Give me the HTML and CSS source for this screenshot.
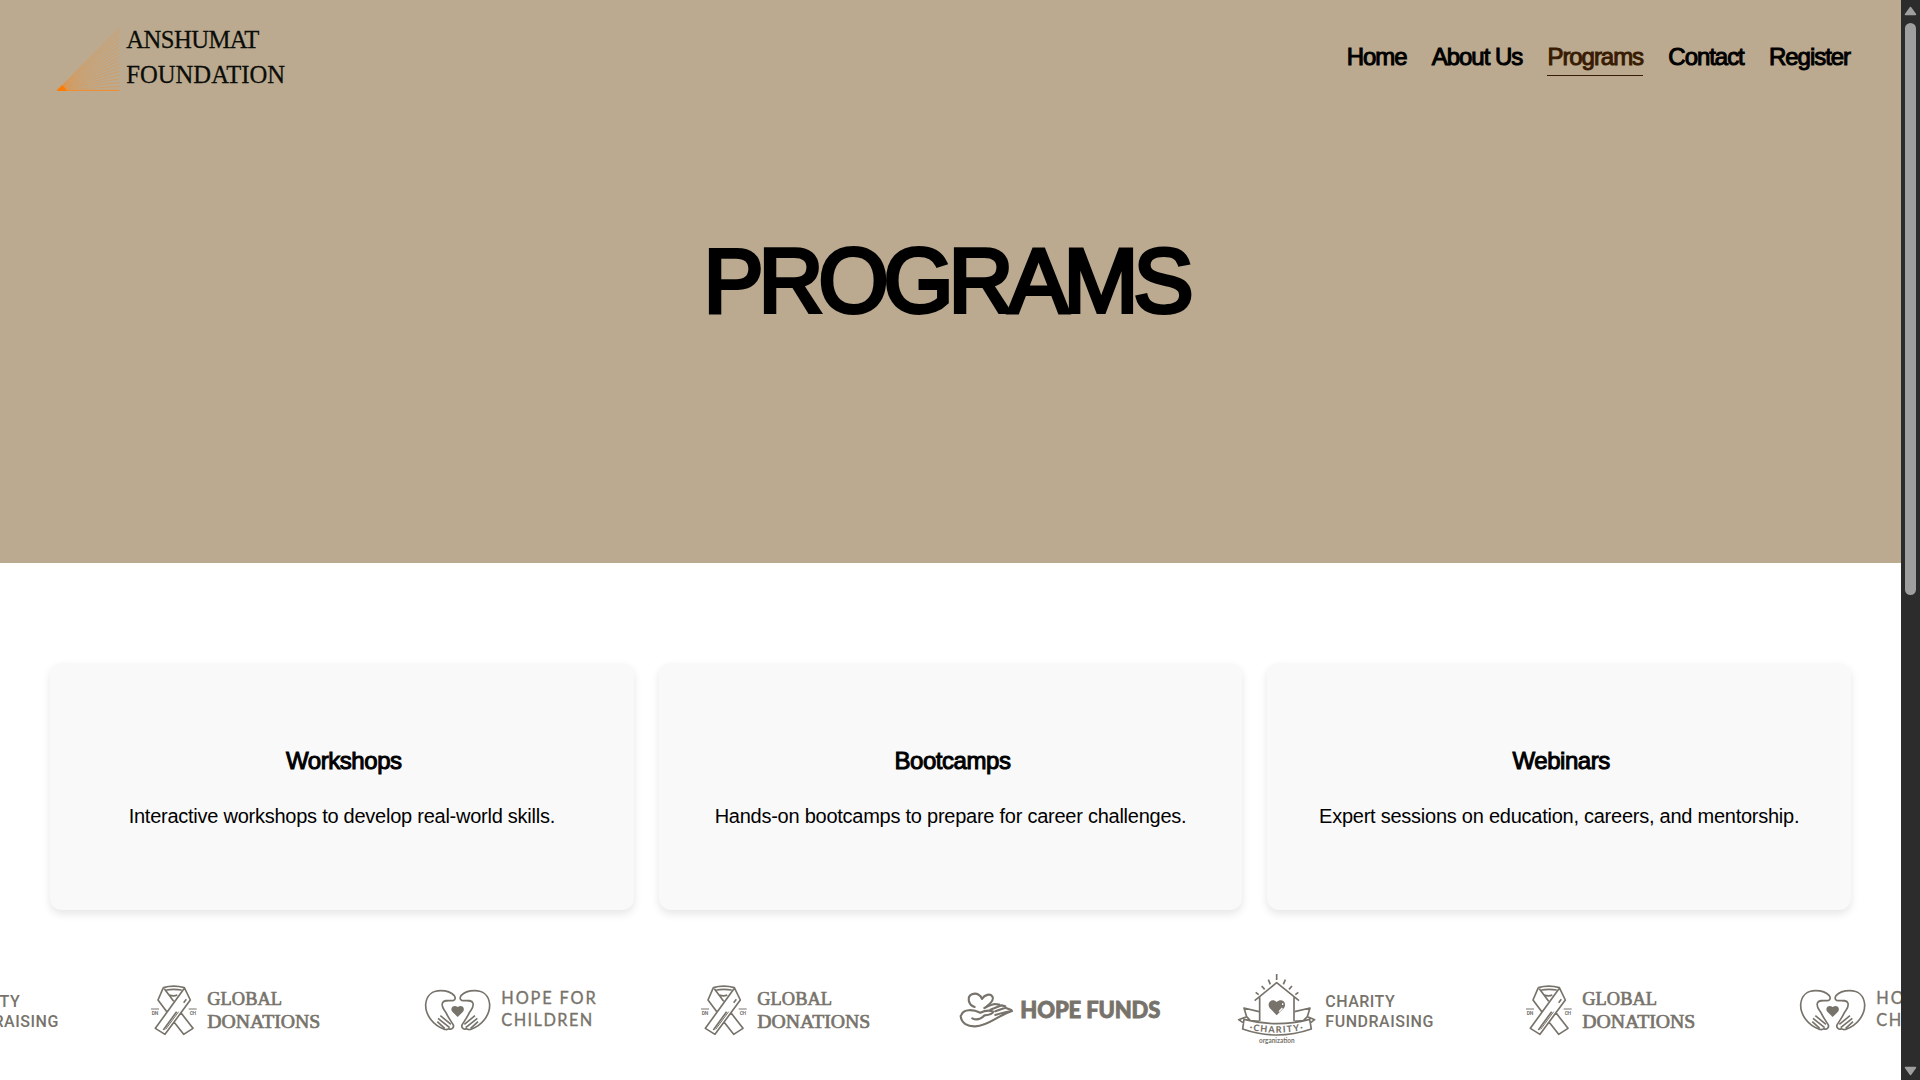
FILE: index.html
```html
<!DOCTYPE html>
<html lang="en">
<head>
<meta charset="utf-8">
<title>Programs - Anshumat Foundation</title>
<link rel="stylesheet" href="styles.css">
</head>
<body>
<svg class="defs" width="0" height="0" aria-hidden="true">
  <defs>
    <symbol id="logo-global" viewBox="0 0 825 300">
      <g transform="translate(-294 0)">
        <g class="line">
          <path d="M490 83Q521 74 553 83L571 120 495 223 466 205 552 86M490 83L474 120 501 156M493 86L521 124M499 90Q521 86 545 90M508 105Q521 110 532 105M544 160L579 205 551 223 522 186M490 210L530 155M551 128L559 118"/>
          <path class="thin" d="M497 208L536 155M453 147H477M566 147H590"/>
        </g>
        <text x="455" y="166" class="tiny" textLength="20">DN</text>
        <text x="569" y="166" class="tiny" textLength="19">CH</text>
        <text x="622" y="135" class="serif" textLength="224" lengthAdjust="spacingAndGlyphs">GLOBAL</text>
        <text x="622" y="205" class="serif" textLength="339" lengthAdjust="spacingAndGlyphs">DONATIONS</text>
      </g>
    </symbol>
    <symbol id="logo-children" viewBox="0 0 825 300">
      <g transform="translate(111 0)">
        <g id="hand" class="line">
          <path d="M104 208C70 197 46 165 47 134C49 105 68 92 92 92C110 92 125 98 133 107C139 116 133 123 124 122C112 121 100 120 97 130C94 142 102 148 108 158C114 172 124 184 130 195C133 203 124 210 117 206C112 210 107 209 104 208"/>
          <path d="M91 167L123 193M84 175L119 203M82 185L104 205"/>
        </g>
        <use href="#hand" transform="translate(286 0) scale(-1 1)"/>
        <path class="solid" d="M143 171L127 155C119 145 130 132 143 141C156 132 167 145 159 155Z"/>
        <text x="274" y="133" class="geo" textLength="283">HOPE FOR</text>
        <text x="274" y="197" class="geo" textLength="273">CHILDREN</text>
      </g>
    </symbol>
    <symbol id="logo-funds" viewBox="0 0 825 300">
      <g transform="translate(51 0)">
        <g class="bold">
          <path d="M104 141C84 135 80 110 96 103C110 97 122 105 126 117C134 104 150 100 157 109C164 119 154 129 138 141"/>
          <path d="M64 165C70 146 100 148 121 158C136 151 148 150 160 155C157 162 148 165 134 166C122 178 108 181 97 175"/>
          <path d="M62 168C64 190 83 200 106 199C148 197 169 168 216 153C201 154 188 158 166 165"/>
          <path d="M133 144C146 138 154 134 163 132L178 134M151 149L185 136 196 139M166 154L196 143 214 150"/>
        </g>
        <text x="241" y="173" class="heavy" textLength="420">HOPE FUNDS</text>
      </g>
    </symbol>
    <symbol id="logo-charity" viewBox="0 0 825 300">
      <g transform="translate(66 0)">
        <g class="line">
          <path d="M104 122L170 68 237 122M119 112V184M222 112V184M170 42V60M145 59L151 73M196 59L190 73M125 78L134 88M216 78L207 88M107 97L116 104M235 97L226 104"/>
          <path d="M72 178Q170 204 269 178L274 207Q170 243 68 207ZM72 190L56 179 80 170 72 144 117 155M269 190L284 179 262 170 270 144 224 155M80 170L91 182 117 184M262 170L250 182 224 184"/>
        </g>
        <path class="solid" d="M170 166L149 144C138 127 157 113 170 126C184 113 203 127 192 144Z"/>
        <path class="spark" d="M177 155L187 144M188 135V130"/>
        <path id="ribbon-arc" fill="none" d="M84 208Q170 228 258 208"/>
        <text class="banner"><textPath href="#ribbon-arc" startOffset="4" textLength="166">·CHARITY·</textPath></text>
        <text x="117" y="250" class="org" textLength="107" lengthAdjust="spacingAndGlyphs">organization</text>
        <text x="316" y="142" class="sans" textLength="208">CHARITY</text>
        <text x="316" y="202" class="sans" textLength="324">FUNDRAISING</text>
      </g>
    </symbol>
  </defs>
</svg>

<div class="window">
  <div class="page">
    <div class="hero">
      <header class="header">
        <svg class="brand" viewBox="0 0 810 300" role="img" aria-label="Anshumat Foundation">
          <path class="rays" d="M52 241L238 55M52 241L238 65M52 241L238 75M52 241L238 85M52 241L238 96M52 241L238 107M52 241L238 118M52 241L238 129M52 241L238 140M52 241L238 151M52 241L238 162M52 241L238 173M52 241L238 184M52 241L238 195M52 241L238 206M52 241L238 217M52 241L238 229"/>
          <path class="base" d="M52 241H238"/>
          <path class="tip" d="M50 242L66 226 74 233 82 242Z"/>
          <text x="259" y="113" textLength="399">ANSHUMAT</text>
          <text x="259" y="219" textLength="476">FOUNDATION</text>
        </svg>
        <nav class="nav">
          <a>Home</a><a>About Us</a><a class="active">Programs</a><a>Contact</a><a>Register</a>
        </nav>
      </header>
      <h1>PROGRAMS</h1>
    </div>
    <main class="cards">
      <section class="card"><h2>Workshops</h2><p>Interactive workshops to develop real-world skills.</p></section>
      <section class="card"><h2>Bootcamps</h2><p>Hands-on bootcamps to prepare for career challenges.</p></section>
      <section class="card"><h2>Webinars</h2><p>Expert sessions on education, careers, and mentorship.</p></section>
    </main>
    <div class="partners">
      <svg><use href="#logo-charity"/></svg>
      <svg><use href="#logo-global"/></svg>
      <svg><use href="#logo-children"/></svg>
      <svg><use href="#logo-global"/></svg>
      <svg><use href="#logo-funds"/></svg>
      <svg><use href="#logo-charity"/></svg>
      <svg><use href="#logo-global"/></svg>
      <svg><use href="#logo-children"/></svg>
    </div>
  </div>
  <div class="scrollbar">
    <svg class="arrow" viewBox="0 0 13 10"><path d="M6.5 1.5L11.5 8.5H1.5Z"/></svg>
    <div class="thumb"></div>
    <svg class="arrow down" viewBox="0 0 13 10"><path d="M6.5 8.5L11.5 1.5H1.5Z"/></svg>
  </div>
</div>
</body>
</html>
```
FILE: styles.css
```css
* { box-sizing: border-box; }
body {
  margin: 0;
  overflow: hidden;
  background: #fff;
  color: #000;
  font-family: "Liberation Sans", Arial, sans-serif;
}
.defs { position: absolute; }
.window { display: flex; height: 1080px; }
.page { width: 1901px; overflow: hidden; }

.hero { height: 563px; background: #bbaa8f; }
.header {
  display: flex;
  justify-content: space-between;
  height: 120px;
  padding: 10px 51px 0 40px;
}
.brand { width: 270px; height: 100px; }
.brand text {
  font: 74px "Liberation Serif", serif;
  fill: #0b0d0a;
  stroke: #0b0d0a;
  stroke-width: .8;
}
.rays { fill: none; stroke: #ef8a2c; stroke-width: 1.8; opacity: .65; }
.base { stroke: #f98a24; stroke-width: 3; }
.tip { fill: #ff7a00; }
.nav {
  display: flex;
  gap: 25.3px;
  padding-top: 32px;
  font-size: 24px;
  line-height: 30px;
  letter-spacing: -1.05px;
  -webkit-text-stroke: 1px currentColor;
}
.nav a { height: 34px; }
.nav .active { color: #381b02; border-bottom: 1px solid #381b02; }
h1 {
  margin: 106px 0 0;
  padding-right: 9px;
  text-align: center;
  font-size: 90px;
  font-weight: 400;
  line-height: 110px;
  letter-spacing: -5px;
  -webkit-text-stroke: 4px #000;
}

.cards {
  display: grid;
  grid-template-columns: repeat(3, 1fr);
  gap: 25px;
  padding: 100px 50px 50px;
}
.card {
  height: 247px;
  padding: 83px 20px 0;
  border-radius: 12px;
  background: #f9f9f9;
  box-shadow: 0 4px 8px rgba(0, 0, 0, .1);
  text-align: center;
}
.card h2 {
  margin: 0 0 26px;
  padding-left: 4px;
  font-size: 24px;
  font-weight: 400;
  line-height: 30px;
  letter-spacing: -0.45px;
  -webkit-text-stroke: 1px #000;
}
.card p {
  margin: 0;
  font-size: 20px;
  line-height: 28px;
  letter-spacing: -0.25px;
  white-space: nowrap;
}

.partners { display: flex; margin-left: -177px; }
.partners svg { flex: none; width: 275px; height: 100px; }
.line { fill: none; stroke: #77736b; stroke-width: 5; stroke-linejoin: round; }
.thin { stroke-width: 3; }
.bold { fill: none; stroke: #77736b; stroke-width: 6.5; stroke-linejoin: round; stroke-linecap: round; }
.solid { fill: #77736b; }
.spark { fill: none; stroke: #fff; stroke-width: 4; }
symbol text { fill: #77736b; }
.serif { font: 57px "Liberation Serif", serif; stroke: #77736b; stroke-width: 2; }
.geo { font: 49px Lato, sans-serif; stroke: #77736b; stroke-width: 1; }
.heavy { font: 900 66px Lato, sans-serif; stroke: #77736b; stroke-width: 2.5; }
.sans { font: 500 48px Roboto, sans-serif; }
.tiny { font: bold 15px Roboto, sans-serif; }
.banner { font: 900 27px Lato, sans-serif; letter-spacing: 3px; }
.org { font: bold 21px Lato, sans-serif; }

.scrollbar {
  display: flex;
  flex-direction: column;
  align-items: center;
  width: 19px;
  padding: 6px 0 4px;
  background: #2c2c2c;
}
.thumb { width: 11px; height: 572px; flex: none; margin-top: 7px; border-radius: 6px; background: #9f9f9f; }
.arrow { flex: none; width: 13px; height: 10px; }
.arrow path { fill: #9f9f9f; stroke: #9f9f9f; stroke-width: 1.5; stroke-linejoin: round; }
.down { margin-top: auto; }
```
